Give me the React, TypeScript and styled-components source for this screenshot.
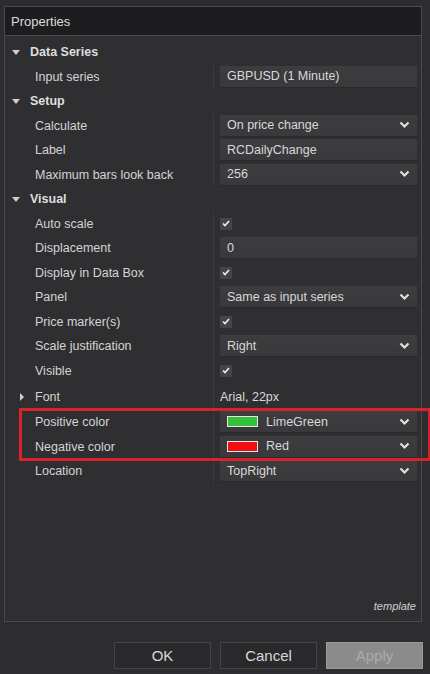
import styled, { createGlobalStyle } from "styled-components";

const GlobalStyle = createGlobalStyle`
  html, body {
    margin: 0;
    padding: 0;
    background: #2d2d30;
  }
  body {
    font-family: "Liberation Sans", Arial, sans-serif;
    font-size: 12px;
    color: #d6d6d6;
  }
`;

const Dialog = styled.div`
  display: flex;
  flex-direction: column;
  width: 430px;
  height: 674px;
  padding: 6px 8px 0 4px;
  box-sizing: border-box;
`;

const Panel = styled.div`
  display: flex;
  flex-direction: column;
  height: 616px;
  border: 1px solid #4a4a4c;
  box-sizing: border-box;
  background: #2f2f32;
`;

const TitleBar = styled.div`
  height: 28px;
  display: flex;
  align-items: center;
  padding-left: 6px;
  background: #1d1d1f;
  border-bottom: 1px solid #4c4c4e;
  font-size: 13px;
  color: #dcdcdc;
`;

const Tree = styled.div`
  display: flex;
  flex-direction: column;
  padding-top: 4px;
  flex: 1;
`;

const HeaderRow = styled.div`
  height: 24.5px;
  display: flex;
  align-items: center;
  padding-left: 7px;
  font-weight: bold;
  font-size: 12.5px;
  color: #dedede;
`;

const Caret = styled.span<{ $open?: boolean }>`
  width: 0;
  height: 0;
  margin-right: ${(p) => (p.$open ? "10px" : "11px")};
  ${(p) =>
    p.$open
      ? `border-left: 4.5px solid transparent;
         border-right: 4.5px solid transparent;
         border-top: 5px solid #cfcfcf;`
      : `border-top: 4px solid transparent;
         border-bottom: 4px solid transparent;
         border-left: 4px solid #cfcfcf;`}
`;

const ItemRow = styled.div<{ $tall?: boolean }>`
  height: ${(p) => (p.$tall ? "27px" : "24.5px")};
  display: grid;
  grid-template-columns: 209px 1fr;
  align-items: center;
`;

const Label = styled.div<{ $indent?: number }>`
  display: flex;
  align-items: center;
  height: 100%;
  padding-left: ${(p) => p.$indent ?? 30}px;
  border-right: 1px solid #3b3b3e;
  box-sizing: border-box;
  font-size: 12.5px;
  color: #d4d4d4;
`;

const ValueCell = styled.div`
  display: flex;
  align-items: center;
  height: 100%;
  padding: 0 4px 0 6px;
`;

const Box = styled.div`
  flex: 1;
  height: 21px;
  display: flex;
  align-items: center;
  padding: 0 7px;
  background: linear-gradient(#3d3d40, #39393c);
  border-bottom: 1px solid #2a2a2c;
  font-size: 12.5px;
  color: #d8d8d8;
`;

const PlainValue = styled.div<{ $flush?: boolean }>`
  padding-left: ${(p) => (p.$flush ? 0 : 5)}px;
  font-size: 12.5px;
  color: #d8d8d8;
`;

const Chevron = styled.svg`
  margin-left: auto;
  width: 11px;
  height: 8px;
`;

const Check = styled.div`
  width: 12px;
  height: 12px;
  background: #454548;
  display: flex;
  align-items: center;
  justify-content: center;
`;

const Swatch = styled.span<{ $color: string }>`
  width: 29px;
  height: 9px;
  margin-right: 8px;
  background: ${(p) => p.$color};
  border: 1px solid #e6e6e6;
`;

const Highlight = styled.div`
  position: relative;
  &::after {
    content: "";
    position: absolute;
    top: -2px;
    bottom: -2px;
    left: 14px;
    right: -10px;
    border: 3px solid #d8232b;
    pointer-events: none;
  }
`;

const Footer = styled.div`
  display: flex;
  justify-content: flex-end;
  padding: 0 5px 9px 0;
  font-style: italic;
  font-size: 11px;
  color: #cfcfcf;
`;

const Buttons = styled.div`
  display: flex;
  justify-content: flex-end;
  gap: 9px;
  margin-top: 20px;
  margin-right: -1px;
`;

const Button = styled.button<{ $disabled?: boolean }>`
  width: 97px;
  height: 27px;
  font-family: "Liberation Sans", Arial, sans-serif;
  font-size: 15px;
  border: 1px solid ${(p) => (p.$disabled ? "#9a9a9a" : "#444447")};
  background: ${(p) => (p.$disabled ? "#8b8b8b" : "#2a2a2c")};
  color: ${(p) => (p.$disabled ? "#acacac" : "#d8d8d8")};
`;

function ChevronIcon() {
  return (
    <Chevron viewBox="0 0 11 8">
      <path d="M1.5 1.5 L5.5 5.5 L9.5 1.5" stroke="#e0e0e0" strokeWidth="2.2" fill="none" />
    </Chevron>
  );
}

function CheckIcon() {
  return (
    <svg width="8" height="7" viewBox="0 0 8 7">
      <path d="M1 3.5 L3 5.5 L7 1" stroke="#f0f0f0" strokeWidth="1.6" fill="none" />
    </svg>
  );
}

type Item = {
  label: string;
  kind: "text" | "select" | "check" | "plain";
  value?: string;
  swatch?: string;
};

function Row({ label, kind, value, swatch }: Item) {
  return (
    <ItemRow>
      <Label>{label}</Label>
      <ValueCell>
        {kind === "check" && (
          <Check>
            <CheckIcon />
          </Check>
        )}
        {kind === "text" && <Box>{value}</Box>}
        {kind === "select" && (
          <Box>
            {swatch && <Swatch $color={swatch} />}
            {value}
            <ChevronIcon />
          </Box>
        )}
        {kind === "plain" && <PlainValue>{value}</PlainValue>}
      </ValueCell>
    </ItemRow>
  );
}

const visual: Item[] = [
  { label: "Auto scale", kind: "check" },
  { label: "Displacement", kind: "text", value: "0" },
  { label: "Display in Data Box", kind: "check" },
  { label: "Panel", kind: "select", value: "Same as input series" },
  { label: "Price marker(s)", kind: "check" },
  { label: "Scale justification", kind: "select", value: "Right" },
  { label: "Visible", kind: "check" },
];

export default function App() {
  return (
    <>
      <GlobalStyle />
      <Dialog>
        <Panel>
          <TitleBar>Properties</TitleBar>
          <Tree>
            <HeaderRow>
              <Caret $open />
              Data Series
            </HeaderRow>
            <Row label="Input series" kind="text" value="GBPUSD (1 Minute)" />
            <HeaderRow>
              <Caret $open />
              Setup
            </HeaderRow>
            <Row label="Calculate" kind="select" value="On price change" />
            <Row label="Label" kind="text" value="RCDailyChange" />
            <Row label="Maximum bars look back" kind="select" value="256" />
            <HeaderRow>
              <Caret $open />
              Visual
            </HeaderRow>
            {visual.map((item) => (
              <Row key={item.label} {...item} />
            ))}
            <ItemRow $tall>
              <Label $indent={15}>
                <Caret />
                Font
              </Label>
              <ValueCell>
                <PlainValue $flush>Arial, 22px</PlainValue>
              </ValueCell>
            </ItemRow>
            <Highlight>
              <Row label="Positive color" kind="select" value="LimeGreen" swatch="#35c23a" />
              <Row label="Negative color" kind="select" value="Red" swatch="#f20d14" />
            </Highlight>
            <Row label="Location" kind="select" value="TopRight" />
          </Tree>
          <Footer>template</Footer>
        </Panel>
        <Buttons>
          <Button>OK</Button>
          <Button>Cancel</Button>
          <Button $disabled>Apply</Button>
        </Buttons>
      </Dialog>
    </>
  );
}
